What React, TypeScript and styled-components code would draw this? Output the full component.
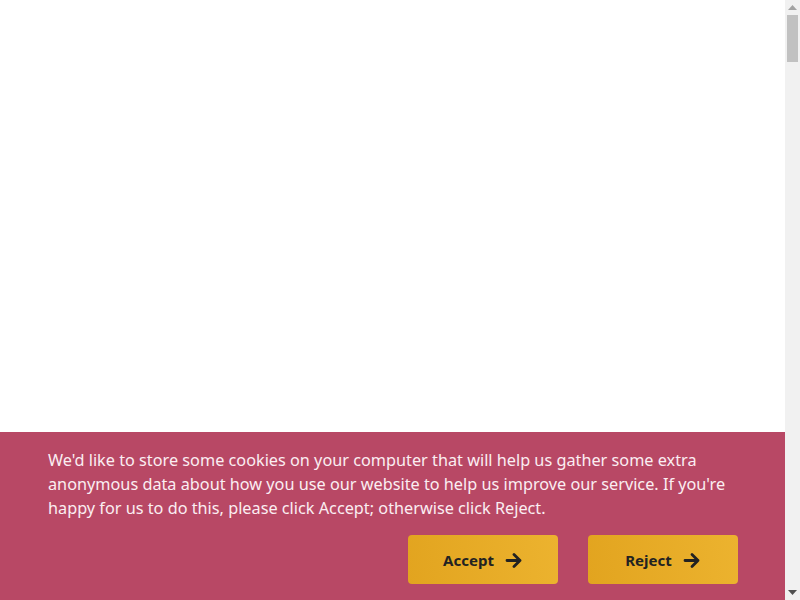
import React from "react";
import styled, { createGlobalStyle } from "styled-components";

const GlobalStyle = createGlobalStyle`
  html {
    scrollbar-width: none;
  }
  body {
    margin: 0;
    background: #ffffff;
    font-family: "Noto Sans", "Open Sans", sans-serif;
  }
`;

const Page = styled.div`
  height: 7200px;
`;

// stand-in for the browser's classic scrollbar, seen in the picture
const ScrollTrack = styled.div`
  position: fixed;
  top: 0;
  right: 0;
  bottom: 0;
  display: flex;
  flex-flow: column;
  width: 15px;
  background: #f1f1f1;
`;

const ScrollButton = styled.div`
  display: flex;
  justify-content: center;
  align-items: center;
  height: 15px;
`;

const ScrollArea = styled.div`
  flex: 1;
  padding: 0 2px;
`;

const ScrollThumb = styled.div`
  height: 47px;
  background: #c1c1c1;
`;

const Banner = styled.div`
  position: fixed;
  left: 0;
  right: 15px;
  bottom: 0;
  display: flex;
  flex-flow: column;
  padding: 16px 47px 16px 48px;
  background-color: #b84865;
  color: #fbeef2;
`;

const Message = styled.p`
  margin: 0;
  max-width: 690px;
  font-size: 16.25px;
  line-height: 24px;
`;

const Actions = styled.div`
  display: flex;
  justify-content: flex-end;
  gap: 30px;
  margin-top: 15px;
`;

const ActionButton = styled.button`
  display: flex;
  justify-content: center;
  align-items: center;
  gap: 11px;
  width: 150px;
  height: 49px;
  padding: 0;
  border: none;
  border-radius: 4px;
  background: linear-gradient(80deg, #e2a41f 0%, #ecb32f 100%);
  color: #222222;
  font-family: "Noto Sans", "Open Sans", sans-serif;
  font-size: 15px;
  font-weight: bold;
  cursor: pointer;
`;

const Arrow = () => (
  <svg width="18" height="18" viewBox="0 0 18 18" fill="none">
    <path
      d="M2 9.5h13M9 3.5l6 6-6 6"
      stroke="#222222"
      strokeWidth="2.8"
      strokeLinecap="round"
      strokeLinejoin="round"
    />
  </svg>
);

const Triangle = (props: { up?: boolean; color: string }) => (
  <svg width="9" height="5" viewBox="0 0 9 5">
    <polygon
      points={props.up ? "4.5,0 9,5 0,5" : "0,0 9,0 4.5,5"}
      fill={props.color}
    />
  </svg>
);

const App = () => {
  return (
    <Page>
      <GlobalStyle />
      <ScrollTrack>
        <ScrollButton>
          <Triangle up color="#a3a3a3" />
        </ScrollButton>
        <ScrollArea>
          <ScrollThumb />
        </ScrollArea>
        <ScrollButton>
          <Triangle color="#505050" />
        </ScrollButton>
      </ScrollTrack>
      <Banner>
        <Message>
          We'd like to store some cookies on your computer that will help us
          gather some extra anonymous data about how you use our website to
          help us improve our service. If you're happy for us to do this,
          please click Accept; otherwise click Reject.
        </Message>
        <Actions>
          <ActionButton>
            Accept <Arrow />
          </ActionButton>
          <ActionButton>
            Reject <Arrow />
          </ActionButton>
        </Actions>
      </Banner>
    </Page>
  );
};

export default App;
